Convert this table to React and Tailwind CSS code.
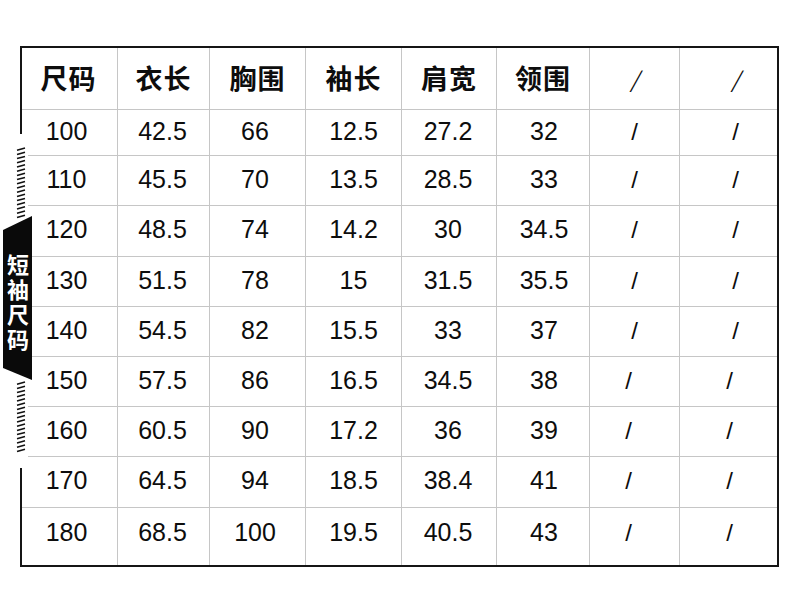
import React from 'react';

const headers = ['尺码', '衣长', '胸围', '袖长', '肩宽', '领围', '/', '/'];

const rows = [
  ['100', '42.5', '66', '12.5', '27.2', '32'],
  ['110', '45.5', '70', '13.5', '28.5', '33'],
  ['120', '48.5', '74', '14.2', '30', '34.5'],
  ['130', '51.5', '78', '15', '31.5', '35.5'],
  ['140', '54.5', '82', '15.5', '33', '37'],
  ['150', '57.5', '86', '16.5', '34.5', '38'],
  ['160', '60.5', '90', '17.2', '36', '39'],
  ['170', '64.5', '94', '18.5', '38.4', '41'],
  ['180', '68.5', '100', '19.5', '40.5', '43'],
];

const cjk = { fontFamily: '"Noto Sans CJK SC", "Liberation Sans", sans-serif' };
const num = { fontFamily: '"Liberation Sans", Arial, sans-serif' };

const Hatch = ({ from, to }) => {
  const lines = [];
  for (let y = from; y <= to; y += 4.2) {
    lines.push(<line key={y} x1="17" y1={y + 2.2} x2="25" y2={y} stroke="#111" strokeWidth="1.6" />);
  }
  return <g>{lines}</g>;
};

const SideTag = () => (
  <div className="absolute left-0 top-[134px] w-[34px] h-[334px]">
    <div className="absolute left-0 top-0 w-[28px] h-[334px] bg-white" />
    <svg width="34" height="334" className="absolute left-0 top-0">
      <Hatch from={14} to={84} />
      <Hatch from={248} to={316} />
      <polygon points="3,96 32,82 32,246 3,234" fill="#0a0a0a" />
    </svg>
    <div
      className="absolute left-[3px] top-[120px] w-[29px] flex justify-center text-white text-[22px] leading-[29px] tracking-[3px] font-bold [writing-mode:vertical-rl]"
      style={cjk}
    >
      短袖尺码
    </div>
  </div>
);

const colPad = ['pr-[6px]', 'pr-[2px]', 'pr-[5px]', '', 'pr-[2px]', 'pl-[2px]'];

export default function App() {
  return (
    <div className="relative w-[790px] h-[598px] bg-white pt-[46px] pl-[20px]">
      <div className="grid w-fit grid-cols-[95px_91px_95px_95px_94px_92px_89px_97px] grid-rows-[61px_45px_49px_50px_49px_49px_49px_49px_50px_57px] gap-px bg-[#c6c6c6] border-2 border-[#151515]">
        {headers.map((h, i) => (
          <div
            key={'h' + i}
            className={`bg-white flex items-center justify-center text-[#0d0d0d] ${
              i < 6 ? 'text-[27px] font-bold tracking-[1px]' : 'text-[22px] font-normal italic'
            } ${i === 0 ? 'pr-[2px]' : ''} ${i === 7 ? 'pl-[14px]' : ''}`}
            style={cjk}
          >
            {h}
          </div>
        ))}
        {rows.map((r, ri) => {
          const last = ri === rows.length - 1;
          const shift = ri >= 5;
          const pb = last ? 'pb-[8px]' : 'pb-[2px]';
          return (
            <React.Fragment key={ri}>
              {r.map((v, ci) => (
                <div
                  key={ci}
                  className={`bg-white flex items-center justify-center text-[25px] text-[#0d0d0d] ${pb} ${colPad[ci]}`}
                  style={num}
                >
                  {v}
                </div>
              ))}
              <div
                className={`bg-white flex items-center justify-center text-[24px] text-[#0d0d0d] ${pb} ${
                  shift ? 'pr-[12px]' : ''
                }`}
                style={num}
              >
                /
              </div>
              <div
                className={`bg-white flex items-center justify-center text-[24px] text-[#0d0d0d] ${pb} ${
                  shift ? 'pl-[2px]' : 'pl-[14px]'
                }`}
                style={num}
              >
                /
              </div>
            </React.Fragment>
          );
        })}
      </div>
      <SideTag />
    </div>
  );
}
